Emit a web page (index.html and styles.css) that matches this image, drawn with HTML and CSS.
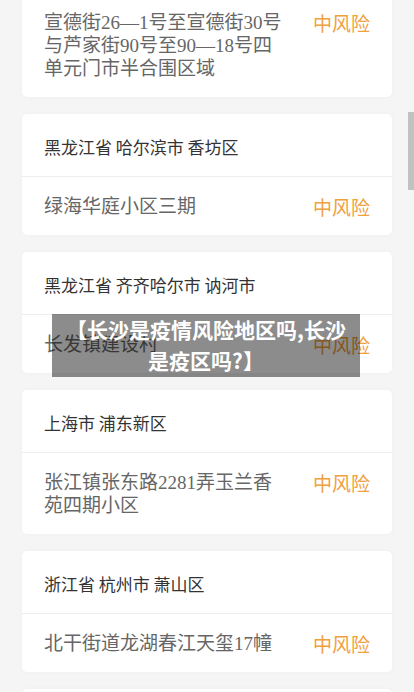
FILE: index.html
```html
<!DOCTYPE html>
<html lang="zh-CN">
<head>
    <meta charset="UTF-8">
    <title>长沙是疫情风险地区吗</title>
    <link rel="stylesheet" href="styles.css">
</head>
<body>
    <div class="lista">
        <div class="tarjeta primera">
            <div class="fila">
                <div class="lugar">宣德街26—1号至宣德街30号与芦家街90号至90—18号四单元门市半合围区域</div>
                <div class="nivel">中风险</div>
            </div>
        </div>

        <div class="tarjeta">
            <div class="cabecera">黑龙江省 哈尔滨市 香坊区</div>
            <div class="fila">
                <div class="lugar">绿海华庭小区三期</div>
                <div class="nivel">中风险</div>
            </div>
        </div>

        <div class="tarjeta">
            <div class="cabecera">黑龙江省 齐齐哈尔市 讷河市</div>
            <div class="fila">
                <div class="lugar">长发镇建设村</div>
                <div class="nivel">中风险</div>
            </div>
        </div>

        <div class="tarjeta">
            <div class="cabecera">上海市 浦东新区</div>
            <div class="fila">
                <div class="lugar">张江镇张东路2281弄玉兰香苑四期小区</div>
                <div class="nivel">中风险</div>
            </div>
        </div>

        <div class="tarjeta">
            <div class="cabecera">浙江省 杭州市 萧山区</div>
            <div class="fila">
                <div class="lugar">北干街道龙湖春江天玺17幢</div>
                <div class="nivel">中风险</div>
            </div>
        </div>

        <div class="tarjeta vacia"></div>
    </div>

    <div class="titulo">【长沙是疫情风险地区吗,长沙是疫区吗?】</div>

    <div class="barra"></div>
</body>
</html>
```

FILE: styles.css
```css
html, body {
    height: 100%;
    overflow: hidden;
}

body {
    margin: 0;
    background-color: #f5f5f5;
    font-family: "Noto Sans CJK SC", sans-serif;
}

.lista {
    display: flex;
    flex-direction: column;
    gap: 17px;
    padding: 0 22px;
}

.tarjeta {
    background-color: #fff;
    border-radius: 5px;
    box-shadow: 0 0 4px rgba(0, 0, 0, 0.03);
}

.tarjeta.primera {
    margin-top: -7px;
}

.tarjeta.vacia {
    height: 60px;
}

.cabecera {
    padding: 21px 22px 18px;
    font-size: 17px;
    line-height: 23px;
    color: #333;
    border-bottom: 1px solid #eee;
}

.fila {
    display: flex;
    align-items: flex-start;
    padding: 18px 22px 17px;
}

.lugar {
    flex: 1;
    font-family: "Liberation Serif", "Noto Sans CJK SC", serif;
    font-size: 19px;
    line-height: 23px;
    color: #666;
}

.nivel {
    padding-left: 24px;
    font-size: 19px;
    line-height: 23px;
    color: #f0a03c;
}

.titulo {
    position: absolute;
    top: 314px;
    left: 52px;
    width: 292px;
    height: 63px;
    padding: 0 8px;
    background-color: rgba(0, 0, 0, 0.45);
    color: #fff;
    font-size: 21px;
    font-weight: bold;
    line-height: 31px;
    text-align: center;
}

.barra {
    position: absolute;
    top: 112px;
    right: 0;
    width: 6px;
    height: 78px;
    background-color: #c1c1c1;
}
```
